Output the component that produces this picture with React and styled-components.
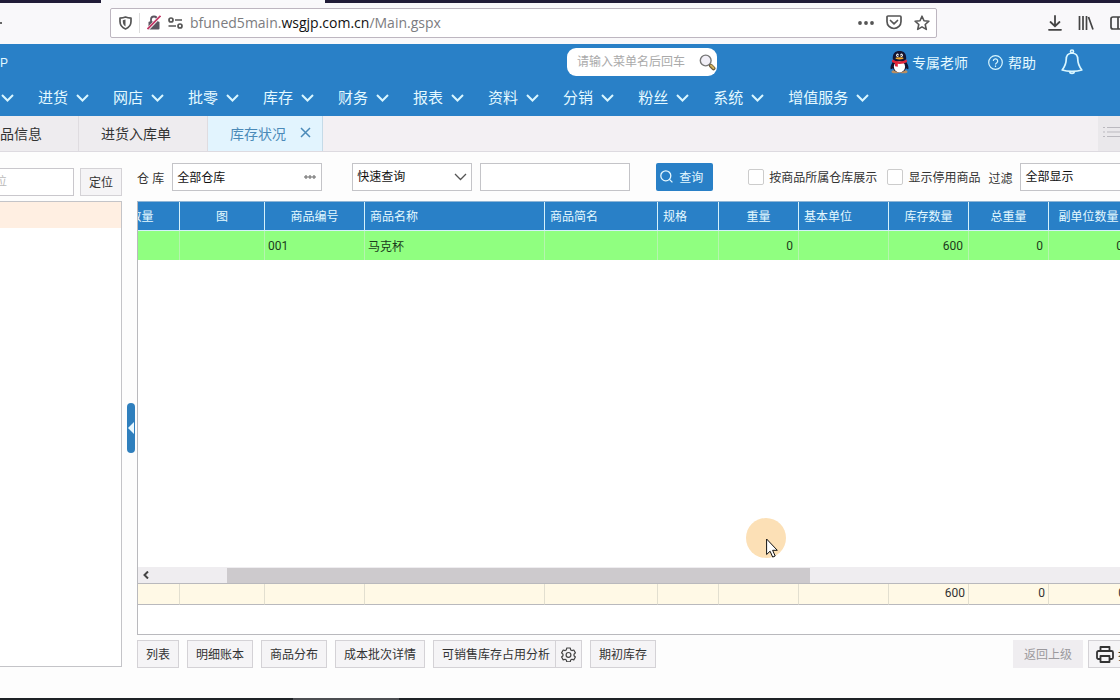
import React from "react";
import styled, { createGlobalStyle } from "styled-components";

const GlobalStyle = createGlobalStyle`
  * {
    box-sizing: border-box;
  }
  body {
    margin: 0;
    background: #fdfdfd;
  }
  body,
  button,
  input,
  select {
    font-family: "Liberation Sans", "Noto Sans CJK SC", sans-serif;
    font-size: 12px;
    color: #333;
  }
  button {
    cursor: pointer;
  }
`;

const MENUS = ["进货", "网店", "批零", "库存", "财务", "报表", "资料", "分销", "粉丝", "系统", "增值服务"];

const COLUMNS = [
  { key: "qty", title: "数量", width: 76, head: "center" },
  { key: "pic", title: "图", width: 85, head: "center" },
  { key: "code", title: "商品编号", width: 100, head: "center" },
  { key: "name", title: "商品名称", width: 180, head: "left" },
  { key: "short", title: "商品简名", width: 113, head: "left" },
  { key: "spec", title: "规格", width: 61, head: "left" },
  { key: "weight", title: "重量", width: 80, head: "center", cell: "right" },
  { key: "unit", title: "基本单位", width: 90, head: "left" },
  { key: "stock", title: "库存数量", width: 80, head: "center", cell: "right" },
  { key: "total", title: "总重量", width: 80, head: "center", cell: "right" },
  { key: "sub", title: "副单位数量", width: 80, head: "center", cell: "right" }
];

const ROWS = [{ code: "001", name: "马克杯", weight: "0", stock: "600", total: "0", sub: "0" }];
const SUMMARY = { stock: "600", total: "0", sub: "0" };

const Chevron = ({ color = "#d9f6ff", width = 2 }) => (
  <svg width="13" height="8" viewBox="0 0 13 8" fill="none" stroke={color} strokeWidth={width}>
    <path d="M1 1l5.5 5.5L12 1" />
  </svg>
);

const ShieldIcon = () => (
  <svg width="13" height="14" viewBox="0 0 13 14" fill="none" stroke="#555" strokeWidth="1.7">
    <path d="M6.5 1C4.8 1.7 3 2 1 2.1v3.4c0 3.5 2 6 5.5 7.5C10 11.500 12 9 12 5.500V2.100C10 2 8.200 1.700 6.500 1z" strokeLinejoin="round" />
    <path d="M6.5 3.500v7C4.500 9.300 3.800 7.500 3.800 5.500V4.200z" fill="#555" stroke="none" />
  </svg>
);

const LockOffIcon = () => (
  <svg width="14" height="15" viewBox="0 0 14 15" fill="none">
    <path d="M4 7V4.500a3 3 0 0 1 6 0V7" stroke="#5a5560" strokeWidth="1.8" />
    <rect x="1.5" y="6.5" width="11" height="8" rx="1" fill="#5a5560" />
    <path d="M0.5 14.5L13.5 1" stroke="#fff" strokeWidth="3" />
    <path d="M0.5 14L13.5 0.8" stroke="#c33a68" strokeWidth="1.8" />
  </svg>
);

const PermissionIcon = () => (
  <svg width="15" height="12" viewBox="0 0 15 12" fill="none" stroke="#555" strokeWidth="1.7">
    <circle cx="3" cy="3" r="2" />
    <path d="M7 3h7M0.5 9H8" />
    <circle cx="12" cy="9" r="2" />
  </svg>
);

const DotsIcon = () => (
  <svg width="16" height="4" viewBox="0 0 16 4" fill="#555">
    <circle cx="2" cy="2" r="1.9" />
    <circle cx="8" cy="2" r="1.9" />
    <circle cx="14" cy="2" r="1.9" />
  </svg>
);

const PocketIcon = () => (
  <svg width="16" height="15" viewBox="0 0 16 15" fill="none" stroke="#555" strokeWidth="1.7" strokeLinejoin="round" strokeLinecap="round">
    <path d="M2 1h12a1 1 0 0 1 1 1v4.500a7 7 0 0 1-14 0V2a1 1 0 0 1 1-1z" />
    <path d="M4.500 5.500L8 8.800l3.500-3.300" />
  </svg>
);

const StarIcon = () => (
  <svg width="16" height="16" viewBox="0 0 16 16" fill="none" stroke="#555" strokeWidth="1.6" strokeLinejoin="round">
    <path d="M8 1.200l2 4.500 4.900.5-3.700 3.300 1.100 4.900L8 11.900l-4.300 2.500 1.100-4.900L1.100 6.200 6 5.700z" />
  </svg>
);

const DownloadIcon = () => (
  <svg width="14" height="16" viewBox="0 0 14 16" fill="none" stroke="#444" strokeWidth="1.8" strokeLinecap="round">
    <path d="M7 1v10M2.500 7L7 11.200 11.500 7M1 14.800h12" />
  </svg>
);

const LibraryIcon = () => (
  <svg width="16" height="14" viewBox="0 0 16 14" fill="none" stroke="#444" strokeWidth="1.7">
    <path d="M1.500 0v14M5 0v14M8.500 0v14M10.500 1l4.500 12.500" />
  </svg>
);

const SidebarIcon = () => (
  <svg width="16" height="14" viewBox="0 0 16 14" fill="none" stroke="#444" strokeWidth="1.7">
    <rect x="1" y="1" width="14" height="12" rx="2" />
    <path d="M8 1v12" />
  </svg>
);

const MagnifierIcon = () => (
  <svg width="17" height="17" viewBox="0 0 17 17" fill="none">
    <circle cx="6.700" cy="6.500" r="5.400" fill="#f1eff7" stroke="#777" strokeWidth="1.4" />
    <path d="M10.500 10.500l1.500 1.500" stroke="#666" strokeWidth="2" />
    <path d="M12 11.800l2.500 2.500" stroke="#6b5a38" strokeWidth="4" strokeLinecap="round" />
    <path d="M12 11.500l2.500 2.500" stroke="#d3b25e" strokeWidth="2" strokeLinecap="round" />
  </svg>
);

const PenguinIcon = () => (
  <svg width="19" height="24" viewBox="0 0 19 24">
    <ellipse cx="5.500" cy="21.700" rx="4" ry="1.600" fill="#b98f62" />
    <ellipse cx="13.500" cy="21.700" rx="4" ry="1.600" fill="#b98f62" />
    <path d="M3.500 11C1.500 13.500 0 16.500.6 19c.6.800 1.900-.3 2.700-1.500zM15.500 11c2 2.500 3.500 5.500 2.900 8-.6.800-1.900-.3-2.700-1.500z" fill="#151530" />
    <ellipse cx="9.500" cy="15.500" rx="7.300" ry="7" fill="#151530" />
    <ellipse cx="9.500" cy="16.800" rx="5.600" ry="5.600" fill="#fff" />
    <path d="M2.800 9C2.500 3.500 5 1 9.500 1S16.500 3.500 16.200 9c-1 3-12.400 3-13.400 0z" fill="#151530" />
    <ellipse cx="7.500" cy="5.200" rx="1.300" ry="1.700" fill="#fff" />
    <ellipse cx="11.500" cy="5.200" rx="1.300" ry="1.700" fill="#fff" />
    <circle cx="7.900" cy="5.400" r=".7" fill="#111" />
    <circle cx="11.100" cy="5.400" r=".7" fill="#111" />
    <ellipse cx="9.500" cy="8.300" rx="4" ry="1.100" fill="#f0a92c" />
    <path d="M2.500 9.500c3.500 2.500 10.500 2.500 14 0l.7 2.300c-4 3-11.400 3-15.400 0z" fill="#e2263a" />
    <path d="M5 12.800l2.800.5v3.500l-2.800-.5z" fill="#e2263a" />
  </svg>
);

const HelpIcon = () => (
  <svg width="15" height="15" viewBox="0 0 15 15" fill="none" stroke="#d9f6ff" strokeWidth="1.2">
    <circle cx="7.500" cy="7.500" r="6.800" />
    <path d="M5.300 6a2.200 2.200 0 1 1 3.300 1.900c-.8.500-1.100.8-1.100 1.600M7.500 10.500v1.400" />
  </svg>
);

const BellIcon = () => (
  <svg width="22" height="26" viewBox="0 0 22 26" fill="none" stroke="#d9f6ff" strokeWidth="1.7" strokeLinejoin="round">
    <circle cx="11" cy="2.500" r="1.500" />
    <path d="M11 4c-4 .3-5.800 3-5.800 6.500 0 5-1.500 7-4 10.500 3 1 6 1.300 9.800 1.300s6.800-.3 9.800-1.300c-2.500-3.500-4-5.500-4-10.500C16.800 7 15 4.300 11 4z" />
    <path d="M8.500 22.500c.5 2.500 4.500 2.500 5 0" />
  </svg>
);

const CloseIcon = () => (
  <svg width="11" height="11" viewBox="0 0 11 11" stroke="#4b8ab8" strokeWidth="1.5">
    <path d="M1 1l9 9M10 1l-9 9" />
  </svg>
);

const ListIcon = () => (
  <svg width="18" height="12" viewBox="0 0 18 12" stroke="#bbb9bf" strokeWidth="1">
    <path d="M0 1.500h2M4 1.500h14M0 6h2M4 6h14M0 10.500h2M4 10.500h14" />
  </svg>
);

const SearchIcon = () => (
  <svg width="13" height="13" viewBox="0 0 13 13" fill="none" stroke="#e4f7ff" strokeWidth="1.3">
    <circle cx="5.800" cy="5.800" r="5" />
    <path d="M9.400 9.400l3 3" />
  </svg>
);

const GearIcon = () => (
  <svg width="15" height="15" viewBox="0 0 15 15" fill="none" stroke="#444" strokeWidth="1.2" strokeLinejoin="round">
    <path d="M5.800 1h3.400l.5 1.900 1.200.7 1.900-.6 1.600 2.900-1.400 1.300v1.500l1.400 1.300-1.600 2.900-1.900-.6-1.200.7-.5 1.800H5.800l-.5-1.800-1.200-.7-1.900.6-1.600-2.900L2 8.700V7.200L.6 5.900 2.200 3l1.900.6 1.200-.7z" />
    <circle cx="7.500" cy="7.900" r="2.400" />
  </svg>
);

const PrinterIcon = () => (
  <svg width="18" height="17" viewBox="0 0 18 17" fill="none" stroke="#333" strokeWidth="1.8" strokeLinejoin="round">
    <path d="M4.500 5V1h9v4" />
    <path d="M4.500 13H2.500A1.500 1.500 0 0 1 1 11.500v-5A1.500 1.500 0 0 1 2.500 5h13A1.500 1.500 0 0 1 17 6.500v5a1.500 1.500 0 0 1-1.500 1.500h-2" />
    <path d="M4.500 10h9v6h-9z" />
  </svg>
);

const GridTable = ({ children }) => (
  <Table>
    <colgroup>
      {COLUMNS.map(c => (
        <Col key={c.key} $width={c.width} />
      ))}
    </colgroup>
    {children}
  </Table>
);

const App = () => {
  return (
    <Page>
      <GlobalStyle />
      <TitleStrip>
        <ActiveBrowserTab />
      </TitleStrip>
      <BrowserBar>
        <BrowserBack />
        <AddressBar>
          <ShieldIcon />
          <AddressDivider />
          <LockOffIcon />
          <PermissionIcon />
          <Url>
            bfuned5main.<b>wsgjp.com.cn</b>/Main.gspx
          </Url>
          <AddressActions>
            <DotsIcon />
            <PocketIcon />
            <StarIcon />
          </AddressActions>
        </AddressBar>
        <BrowserTools>
          <DownloadIcon />
          <LibraryIcon />
          <SidebarIcon />
        </BrowserTools>
      </BrowserBar>

      <Header>
        <HeaderTop>
          <Brand>P</Brand>
          <MenuSearch>
            <MenuSearchInput aria-label="菜单搜索" placeholder="请输入菜单名后回车" />
            <PlainButton aria-label="搜索">
              <MagnifierIcon />
            </PlainButton>
          </MenuSearch>
          <HeaderLinks>
            <HeaderLink href="#teacher" $gap={3}>
              <PenguinIcon />
              专属老师
            </HeaderLink>
            <HeaderLink href="#help" $gap={5}>
              <HelpIcon />
              帮助
            </HeaderLink>
            <PlainButton aria-label="消息">
              <BellIcon />
            </PlainButton>
          </HeaderLinks>
        </HeaderTop>
        <Nav>
          <NavItem aria-label="更多">
            <Chevron />
          </NavItem>
          {MENUS.map(m => (
            <NavItem key={m}>
              <NavText>{m}</NavText>
              <Chevron />
            </NavItem>
          ))}
        </Nav>
      </Header>

      <TabBar>
        <Tabs>
          <Tab>商品信息</Tab>
          <Tab>进货入库单</Tab>
          <Tab $active>
            库存状况
            <CloseIcon />
          </Tab>
        </Tabs>
        <TabList aria-label="标签列表">
          <ListIcon />
        </TabList>
      </TabBar>

      <Content>
        <Sidebar>
          <LocateRow>
            <LocateInput aria-label="定位" placeholder="位" />
            <Button>定位</Button>
          </LocateRow>
          <TreePanel>
            <TreeRow />
          </TreePanel>
        </Sidebar>
        <Splitter>
          <SplitHandle aria-label="收起">
            <svg width="6" height="12" viewBox="0 0 6 12" fill="#e9f8ff">
              <path d="M6 0v12L0 6z" />
            </svg>
          </SplitHandle>
        </Splitter>

        <Main>
          <Filters>
            <FieldLabel htmlFor="depot">仓 库</FieldLabel>
            <Picker>
              <PickerInput id="depot" defaultValue="全部仓库" />
              <PlainButton aria-label="选择仓库">
                <svg width="12" height="4" viewBox="0 0 12 4" fill="none" stroke="#555">
                  <circle cx="2" cy="2" r="1.2" />
                  <circle cx="6" cy="2" r="1.2" />
                  <circle cx="10" cy="2" r="1.2" />
                </svg>
              </PlainButton>
            </Picker>
            <SelectBox $width={120} $before={30}>
              <Select aria-label="查询方式">
                <option>快速查询</option>
              </Select>
              <Chevron color="#555" width={1.3} />
            </SelectBox>
            <QueryInput aria-label="查询内容" />
            <QueryButton>
              <SearchIcon />
              查询
            </QueryButton>
            <CheckLabel>
              <CheckBox type="checkbox" />
              <CheckText>按商品所属仓库展示</CheckText>
            </CheckLabel>
            <CheckLabel>
              <CheckBox type="checkbox" />
              <CheckText>显示停用商品</CheckText>
            </CheckLabel>
            <FieldLabel htmlFor="filter">过滤</FieldLabel>
            <SelectBox $width={140} $before={0}>
              <Select id="filter">
                <option>全部显示</option>
              </Select>
              <Chevron color="#555" width={1.3} />
            </SelectBox>
          </Filters>

          <Grid>
            <GridBody>
              <GridTable>
                <thead>
                  <tr>
                    {COLUMNS.map(c => (
                      <Th key={c.key} $align={c.head}>
                        {c.title}
                      </Th>
                    ))}
                  </tr>
                </thead>
                <tbody>
                  {ROWS.map(row => (
                    <tr key={row.code}>
                      {COLUMNS.map(c => (
                        <Td key={c.key} $align={c.cell}>
                          {row[c.key]}
                        </Td>
                      ))}
                    </tr>
                  ))}
                </tbody>
              </GridTable>
            </GridBody>
            <ScrollTrack>
              <svg width="6" height="8" viewBox="0 0 6 8" fill="none" stroke="#444" strokeWidth="2">
                <path d="M5 0.5L1.5 4 5 7.5" />
              </svg>
              <ScrollThumb />
            </ScrollTrack>
            <GridTable>
              <tbody>
                <tr>
                  {COLUMNS.map(c => (
                    <SumTd key={c.key} $align={c.cell}>
                      {SUMMARY[c.key]}
                    </SumTd>
                  ))}
                </tr>
              </tbody>
            </GridTable>
            <GridFoot />
          </Grid>

          <Actions>
            <Button>列表</Button>
            <Button>明细账本</Button>
            <Button>商品分布</Button>
            <Button>成本批次详情</Button>
            <ButtonGroup>
              <SplitButton>可销售库存占用分析</SplitButton>
              <GearButton aria-label="设置">
                <GearIcon />
              </GearButton>
            </ButtonGroup>
            <Button>期初库存</Button>
            <RightActions>
              <BackButton disabled>返回上级</BackButton>
              <PrintButton>
                <PrinterIcon />
                打印
              </PrintButton>
            </RightActions>
          </Actions>
        </Main>
      </Content>
      <TaskStrip>
        <TaskActive />
      </TaskStrip>

      <Pointer>
        <svg width="12" height="20" viewBox="0 0 12 20" fill="#fff" stroke="#111" strokeWidth="1">
          <path d="M.6 1v15.500l3.500-3.300 2.600 5.900 2.500-1.100-2.600-5.700h4.700z" />
        </svg>
      </Pointer>
    </Page>
  );
};

export default App;

const Page = styled.div`
  position: relative;
  display: flex;
  flex-direction: column;
  min-height: 100vh;
  overflow: hidden;
`;

const TitleStrip = styled.div`
  height: 3px;
  padding-left: 101px;
  background: #211c38;
`;

const ActiveBrowserTab = styled.div`
  width: 224px;
  height: 3px;
  background: #f9f9fb;
`;

const BrowserBar = styled.div`
  display: flex;
  align-items: center;
  height: 41px;
  padding-bottom: 2px;
  background: #f9f8fa;
`;

const BrowserBack = styled.div`
  width: 110px;

  &::before {
    content: "";
    display: block;
    width: 2px;
    height: 2px;
    background: #666;
  }
`;

const AddressBar = styled.div`
  display: flex;
  flex: 1;
  align-items: center;
  gap: 7px;
  height: 30px;
  padding: 0 6px 0 8px;
  border: 1px solid #bdb6c0;
  border-radius: 2px;
  background: #fff;
`;

const AddressDivider = styled.div`
  width: 1px;
  height: 20px;
  background: #ddd;
`;

const Url = styled.div`
  flex: 1;
  font-family: "Open Sans", "Noto Sans", sans-serif;
  font-size: 14px;
  color: #7c7c80;

  b {
    font-weight: normal;
    color: #111;
  }
`;

const AddressActions = styled.div`
  display: flex;
  align-items: center;
  gap: 12px;
`;

const BrowserTools = styled.div`
  display: flex;
  flex: 0 0 183px;
  align-items: center;
  justify-content: flex-end;
  gap: 16px;

  svg {
    flex: none;
  }

  svg:last-child {
    margin-right: -6px;
  }
`;

const Header = styled.header`
  height: 72px;
  background: #2980c7;
  color: #e4f9ff;
`;

const HeaderTop = styled.div`
  display: flex;
  align-items: center;
  height: 36px;
  padding-right: 37px;
`;

const Brand = styled.div`
  flex: 1;
  padding-top: 2px;
`;

const MenuSearch = styled.div`
  display: flex;
  align-items: center;
  width: 150px;
  height: 28px;
  padding: 0 1px 0 10px;
  border-radius: 9px;
  background: #fff;
`;

const MenuSearchInput = styled.input`
  flex: 1;
  min-width: 0;
  padding: 0;
  border: 0;
  outline: 0;
  background: none;

  &::placeholder {
    color: #aaa;
  }
`;

const PlainButton = styled.button`
  display: flex;
  padding: 0;
  border: 0;
  background: none;
`;

const HeaderLinks = styled.div`
  display: flex;
  align-items: center;
  gap: 20px;
  margin-left: 173px;

  button {
    margin-left: 5px;
  }
`;

const HeaderLink = styled.a`
  display: flex;
  align-items: center;
  gap: ${p => p.$gap}px;
  font-size: 14px;
  color: #e4f9ff;
  text-decoration: none;
`;

const Nav = styled.nav`
  display: flex;
  gap: 24px;
  height: 36px;
  padding-left: 1px;
`;

const NavItem = styled.button`
  display: flex;
  flex: none;
  align-items: center;
  gap: 8px;
  padding: 0;
  border: 0;
  background: none;
  font-size: 15px;
  color: #e4f9ff;
`;

const NavText = styled.span`
  padding-bottom: 4px;
`;

const TabBar = styled.div`
  display: flex;
  justify-content: space-between;
  height: 36px;
  border-bottom: 1px solid #dddae0;
  background: #f3f0f3;
`;

const Tabs = styled.div`
  display: flex;
  margin-left: -36px;
`;

const Tab = styled.button`
  display: flex;
  align-items: center;
  gap: 14px;
  padding: 0 ${p => (p.$active ? 11 : 36)}px 2px 22px;
  border: 0;
  border-right: 1px solid ${p => (p.$active ? "#c5dbe8" : "#dfdce0")};
  background: ${p => (p.$active ? "#e2f4fe" : "#eeecef")};
  font-size: 14px;
  color: ${p => (p.$active ? "#4b8ab8" : "#333")};
`;

const TabList = styled.button`
  width: 22px;
  padding: 0 0 0 5px;
  border: 0;
  background: #eae8eb;
  overflow: hidden;
`;

const Content = styled.div`
  display: flex;
  flex: 1;
`;

const Sidebar = styled.aside`
  display: flex;
  flex-direction: column;
  flex: none;
  width: 132px;
  margin-left: -10px;
  padding: 16px 0 31px;
`;

const LocateRow = styled.div`
  display: flex;
  gap: 6px;
  margin-bottom: 5px;
`;

const LocateInput = styled.input`
  flex: 1;
  min-width: 0;
  height: 28px;
  padding: 0 4px;
  border: 1px solid #c9c7cc;
  background: #fff;

  &::placeholder {
    color: #bbb;
  }
`;

const TreePanel = styled.div`
  flex: 1;
  border: 1px solid #c4c4c8;
  background: #fff;
`;

const TreeRow = styled.div`
  height: 26px;
  background: #ffefe2;
`;

const Splitter = styled.div`
  display: flex;
  flex: 0 0 15px;
  align-items: center;
  justify-content: center;
  padding: 6px 0 0 2px;
`;

const SplitHandle = styled.button`
  display: flex;
  align-items: center;
  justify-content: center;
  width: 8px;
  height: 50px;
  padding: 0;
  border: 0;
  border-radius: 4px;
  background: #2f7fbd;
`;

const Main = styled.main`
  display: flex;
  flex: 1;
  flex-direction: column;
  min-width: 0;
  margin-right: -40px;
  padding: 11px 0 30px;
`;

const Filters = styled.div`
  display: flex;
  align-items: center;
  margin-bottom: 10px;

  > * {
    flex: none;
  }
`;

const FieldLabel = styled.label`
  margin-right: 8px;
`;

const Picker = styled.div`
  display: flex;
  align-items: center;
  width: 150px;
  height: 28px;
  padding: 0 5px 0 4px;
  border: 1px solid #c4c4c8;
  background: #fff;
`;

const PickerInput = styled.input`
  flex: 1;
  min-width: 0;
  padding: 0 0 2px;
  border: 0;
  outline: 0;
  color: #111;
`;

const SelectBox = styled.div`
  position: relative;
  width: ${p => p.$width}px;
  margin-left: ${p => p.$before}px;

  svg {
    position: absolute;
    top: 10px;
    right: 5px;
    pointer-events: none;
  }
`;

const Select = styled.select`
  display: block;
  width: 100%;
  height: 28px;
  padding: 0 4px;
  border: 1px solid #c4c4c8;
  border-radius: 0;
  background: #fff;
  color: #111;
  appearance: none;
`;

const QueryInput = styled.input`
  width: 150px;
  height: 28px;
  margin: 0 26px 0 8px;
  border: 1px solid #c4c4c8;
  background: #fff;
`;

const QueryButton = styled.button`
  display: flex;
  align-items: center;
  gap: 6px;
  height: 28px;
  margin-right: 35px;
  padding: 0 10px 2px 4px;
  border: 0;
  border-radius: 2px;
  background: #2980c7;
  color: #e4f9ff;
`;

const CheckLabel = styled.label`
  display: flex;
  align-items: center;
  gap: 5px;
  margin-right: 8px;

  & + & {
    margin-left: 2px;
  }
`;

const CheckText = styled.span`
  padding-bottom: 2px;
`;

const CheckBox = styled.input`
  width: 16px;
  height: 16px;
  margin: 0;
  border: 1px solid #ccc;
  border-radius: 2px;
  background: #fff;
  appearance: none;
`;

const Grid = styled.div`
  display: flex;
  flex: 1;
  flex-direction: column;
  border: 1px solid #b9b9bd;
  border-top-color: #8fb5d6;
  background: #fff;
  overflow: hidden;
`;

const GridBody = styled.div`
  flex: 1;
`;

/* scrolled 34px to the right */
const Table = styled.table`
  width: 1025px;
  margin-left: -34px;
  border-collapse: separate;
  border-spacing: 0;
  table-layout: fixed;
`;

const Col = styled.col`
  width: ${p => p.$width}px;
`;

const Th = styled.th`
  height: 29px;
  padding: 0 5px 2px;
  border-right: 1px solid #d5f1fb;
  border-bottom: 1px solid #d5f1fb;
  background: #2980c7;
  font-weight: normal;
  color: #e4f9ff;
  text-align: ${p => p.$align};
  white-space: nowrap;
`;

const Td = styled.td`
  height: 29px;
  padding: 0 5px 0 3px;
  border-right: 1px solid #b5f5ae;
  background: #90ff80;
  font-family: Roboto, "Noto Sans CJK SC", sans-serif;
  color: #1c3a1c;
  text-align: ${p => p.$align || "left"};
`;

const SumTd = styled.td`
  height: 21px;
  padding: 0 3px 2px;
  border-right: 1px solid #e2dfd0;
  border-bottom: 1px solid #b9b9bd;
  background: #fff9e6;
  font-family: Roboto, sans-serif;
  text-align: ${p => p.$align || "left"};
`;

const ScrollTrack = styled.div`
  display: flex;
  align-items: center;
  height: 17px;
  padding-left: 5px;
  border-bottom: 1px solid #b9b9bd;
  background: #efedf0;
`;

const ScrollThumb = styled.div`
  width: 583px;
  height: 15px;
  margin-left: 78px;
  background: #cdcacd;
`;

const GridFoot = styled.div`
  height: 29px;
`;

const Actions = styled.div`
  display: flex;
  gap: 8px;
  margin-top: 5px;
`;

const Button = styled.button`
  flex: none;
  height: 28px;
  padding: 0 8px 2px;
  border: 1px solid #d4d2d6;
  background: #f5f4f6;
`;

const ButtonGroup = styled.div`
  display: flex;
`;

const SplitButton = styled(Button)`
  padding-right: 5px;
  border-right: 0;
`;

const GearButton = styled(Button)`
  display: flex;
  align-items: center;
  padding: 0 5px;
`;

const RightActions = styled.div`
  display: flex;
  gap: 5px;
  margin-left: auto;
`;

const BackButton = styled(Button)`
  padding: 0 11px 2px;
  border: 0;
  background: #efedf0;
  color: #9b999d;
`;

const PrintButton = styled(Button)`
  display: flex;
  align-items: center;
  gap: 4px;
  width: 72px;
  padding: 0 7px;
`;

const TaskStrip = styled.div`
  height: 2px;
  padding-left: 293px;
  background: #1e2226;
`;

const TaskActive = styled.div`
  width: 106px;
  height: 2px;
  background: #4c4e52;
`;

const Pointer = styled.div`
  position: absolute;
  top: 518px;
  left: 746px;
  width: 40px;
  height: 40px;
  padding: 20px 0 0 20px;
  border-radius: 50%;
  background: #fce0b6;
  pointer-events: none;
`;
